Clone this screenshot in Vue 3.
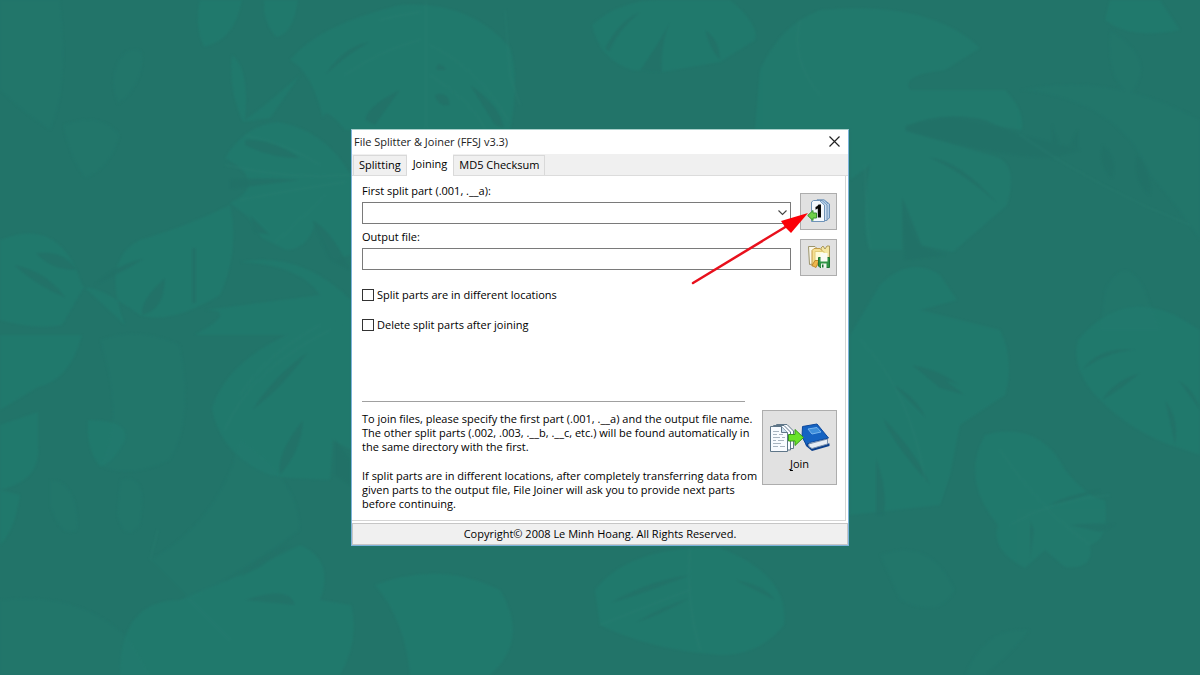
<script setup>
import { ref } from 'vue'

const tabs = ['Splitting', 'Joining', 'MD5 Checksum']
const active = ref('Joining')
const differentLocations = ref(false)
const deleteAfter = ref(false)
const output = ref('')
</script>

<template>
  <div class="desktop">
    <svg class="foliage" viewBox="0 0 1200 675" preserveAspectRatio="xMidYMid slice" aria-hidden="true">
      <g class="faint">
        <path d="M0 0H60Q70 90 50 130Q20 110 0 90Z" />
        <path d="M118 104Q105 75 125 52Q150 40 140 75Q133 95 118 104Z" />
        <path d="M63 125Q70 160 85 178Q110 170 120 135Q100 110 63 125Z" />
        <path d="M100 340Q140 325 180 345Q195 420 170 460Q130 480 100 466Q125 420 100 340Z" />
        <path d="M120 480Q150 470 140 525Q125 545 117 515Z" />
        <path d="M50 480Q78 480 78 530Q60 540 50 505Z" />
        <path d="M1110 30Q1160 60 1130 95Q1105 80 1110 30Z" />
        <path d="M880 555Q930 535 955 590Q940 620 900 600Z" />
        <path d="M1020 90Q1120 100 1150 175Q1180 210 1200 240V120Q1110 70 1020 90Z" />
        <path d="M1105 290Q1125 250 1145 290L1160 330H1100Z" />
        <path d="M240 440Q300 480 300 530Q260 560 190 600Q160 570 150 560Q220 520 240 440Z" />
        <path d="M0 600Q80 590 130 640L150 675H0Z" />
        <path d="M965 675Q985 625 1030 630Q1010 655 985 675Z" />
      </g>
      <g class="leaf">
        <path d="M200 0H242Q235 40 204 47Q194 25 200 0Z" />
        <path d="M264 0H298Q293 35 276 37Q262 20 264 0Z" />
        <path d="M290 60Q318 25 400 5Q470 0 510 48Q520 80 510 130H345Q325 105 323 118Q312 72 290 60Z" />
        <path d="M232 55Q250 70 245 120Q260 110 300 75L270 118L243 122Q228 90 232 55Z" />
        <path d="M225 158Q245 125 278 122Q325 130 351 175V255L333 260L315 225Q306 250 286 250L262 238L248 217L230 203Q270 183 225 158Z" />
        <path d="M0 240Q60 215 82 285L125 325Q100 260 140 240Q190 225 230 205Q240 250 220 295Q170 325 140 315Q90 280 82 290L62 325Q35 330 0 320Z" />
        <path d="M240 262Q300 265 320 295L205 310Q240 310 195 335H351V300Q300 250 240 262Z" />
        <path d="M0 335H82Q70 380 38 387L0 410Z" />
        <path d="M0 425L38 412V445Q42 480 0 490Z" />
        <path d="M212 408Q230 350 330 318L351 330V450L333 440L330 480L290 478L270 475Q220 455 212 408Z" />
        <path d="M0 490L20 495Q15 530 0 545Z" />
        <path d="M88 420Q130 420 125 440Q112 465 100 466Q86 450 88 420Z" />
        <path d="M120 675Q120 600 180 600L240 575L300 545Q335 560 320 600L351 605Q360 640 340 675Z" />
        <path d="M375 585Q440 560 500 590Q530 640 490 675H410Q405 620 375 585Z" />
        <path d="M595 590Q630 545 720 548Q790 575 784 625Q760 655 720 655Q650 650 600 625Z" />
        <path d="M592 25Q620 0 660 0H730Q760 25 755 40L720 62L662 72L632 70Q600 60 592 25Z" />
        <path d="M760 70Q780 25 820 10Q930 0 980 48L945 70Q900 75 910 90H1005Q1025 110 1022 130Q985 125 950 117L906 125V131L990 155Q1020 160 1007 205L953 252L920 245Q905 220 902 198V250H870Q860 230 870 165L850 180V130H755Z" />
        <path d="M1110 0H1160L1180 30Q1130 40 1105 20Z" />
        <path d="M850 335L880 285Q910 255 940 275L957 300L920 310L1000 330Q1015 360 1005 395L960 425L950 475L940 505L895 510L850 515Z" />
        <path d="M1078 340Q1120 290 1175 315L1200 330V455L1170 445Q1130 430 1100 400Q1070 370 1078 340Z" />
        <path d="M985 435Q1040 420 1065 470Q1090 500 1105 500Q1110 540 1090 545Q1095 570 1065 567L1045 550L1025 568Q990 550 998 525Q960 480 985 435Z" />
      </g>
      <g class="slot">
        <path d="M245 140Q270 138 300 158Q270 158 245 145Z" />
        <path d="M230 180Q270 177 300 180L230 189Z" />
        <path d="M312 220Q332 230 350 270L330 260Z" />
        <path d="M250 215L270 235L255 232Z" />
        <path d="M36 253Q65 250 76 270Q50 270 36 253Z" />
        <path d="M14 265Q45 270 66 298Q35 285 14 265Z" />
        <path d="M95 285Q115 265 145 258L125 270Z" />
        <path d="M165 278Q165 310 142 315Q140 300 165 278Z" />
        <path d="M192 248H196V303H192Z" />
        <path d="M325 75Q345 45 370 42Q350 52 325 75Z" />
        <path d="M365 120Q368 105 400 90L375 125Z" />
        <path d="M435 95Q448 90 450 105Q438 108 435 95ZM438 64Q446 66 446 70L436 70Z" />
        <path d="M470 85Q500 105 504 128L495 125Z" />
        <path d="M605 48Q620 20 640 12Q618 30 609 52Z" />
        <path d="M670 22Q660 45 662 72L640 70Q658 45 670 22Z" />
        <path d="M705 30Q720 40 720 60Q710 50 705 30Z" />
        <path d="M905 127Q940 110 985 120L1020 135L1080 150L1050 158Q990 155 906 131Z" />
        <path d="M928 157Q960 160 998 204Q960 170 928 157Z" />
        <path d="M902 197Q910 215 922 246L945 255L905 260Z" />
        <path d="M1052 125L1060 148L1052 160ZM1078 130V150L1070 145ZM1103 145Q1118 160 1112 178Q1098 165 1103 145ZM1137 155Q1152 170 1150 195Q1132 180 1137 155Z" />
        <path d="M912 365Q935 368 960 385L945 380L965 395L940 388Z" />
        <path d="M893 385Q915 395 926 418ZM883 418Q915 450 930 485Q890 440 883 418ZM876 458Q888 490 884 515H876Z" />
        <path d="M1082 370Q1100 345 1138 350Q1110 350 1082 370Z" />
        <path d="M1102 400Q1115 380 1140 373Q1120 390 1102 400ZM1165 400Q1180 420 1175 445ZM1178 380Q1195 390 1200 410Z" />
        <path d="M1070 525Q1100 522 1115 525L1100 532ZM1050 505Q1065 495 1100 490Q1075 500 1050 505ZM1030 520V560L1034 530Z" />
        <path d="M252 410Q275 375 308 352Q280 390 252 410Z" />
        <path d="M303 420Q302 450 280 475Q275 455 303 420ZM335 440L350 460V485L335 475Z" />
        <path d="M240 577Q265 550 290 545L260 567ZM245 600Q290 585 295 605Z" />
        <path d="M610 603Q650 580 690 575Q640 595 610 603ZM635 623Q665 605 690 598Q660 615 635 623ZM735 580Q765 585 775 600Z" />
      </g>
      <g class="vein">
        <path d="M426 0V128" />
        <path d="M225 165Q290 180 351 175M240 200Q290 190 345 182M275 243Q305 215 325 195M245 135Q290 145 320 165" />
        <path d="M345 75Q380 50 420 40M430 45Q480 70 508 120M505 10L510 75L520 105M380 20Q400 15 420 12M430 75Q470 100 485 128" />
        <path d="M800 20Q790 60 820 95M1020 135Q1100 190 1190 225M865 165Q865 210 870 250" />
        <path d="M860 340Q910 390 925 480M1000 450Q1040 510 1090 545M1010 525Q1050 500 1110 495" />
        <path d="M240 395Q265 355 320 325M190 600L230 640M150 560L158 530M225 430Q250 370 330 330" />
        <path d="M690 548Q685 600 700 650M600 625Q650 605 690 590" />
      </g>
    </svg>

    <main class="window">
      <header class="titlebar">
        <h1>File Splitter &amp; Joiner (FFSJ v3.3)</h1>
        <button class="close" type="button" aria-label="Close">
          <svg width="11" height="11" viewBox="0 0 11 11"><path d="M0.5 0.5L10.5 10.5M10.5 0.5L0.5 10.5" fill="none" stroke="#222" stroke-width="1.2" /></svg>
        </button>
      </header>

      <div class="tabs" role="tablist">
        <button
          v-for="tab in tabs"
          :key="tab"
          type="button"
          role="tab"
          class="tab"
          :class="{ active: tab === active }"
          :aria-selected="tab === active"
          @click="active = tab"
        >{{ tab }}</button>
      </div>

      <section class="panel">
        <div class="row">
          <div class="field">
            <label for="first">First split part (.001, .__a):</label>
            <div class="combo">
              <select id="first"><option value=""></option></select>
              <svg class="chevron" width="9" height="6" viewBox="0 0 9 6" aria-hidden="true"><path d="M0.5 0.5L4.5 4.5L8.5 0.5" fill="none" stroke="#444" stroke-width="1.1" /></svg>
            </div>
          </div>
          <button class="tool" type="button" aria-label="Choose first part">
            <svg width="24" height="24" viewBox="0 0 24 24">
              <g stroke="#6f93b8" stroke-width="1">
                <path d="M10 .8H17L22.500 5V19L19.500 21H10Z" fill="#b4cde6" />
                <path d="M7.500 1.500H15L20 6V21.500H7.500Z" fill="#cfe0f1" />
                <path d="M4.500 3L6.500 1.500H12.500L17.500 6V22.500H4.500Z" fill="#f3f8fd" />
              </g>
              <path d="M13 2L17 6M15.500 1.500L19.500 5.500M18 2L21 5" stroke="#7fa6cc" fill="none" />
              <path d="M11.500 5.500H14V18.500H10.800V9.500L8.500 10.700V8Q10.700 7.300 11.500 5.500Z" fill="#080808" />
              <path d="M.7 16.500L6 11.500V14H9.500V19H6V21.500Z" fill="#6fd14a" stroke="#38922c" />
            </svg>
          </button>
        </div>

        <div class="row">
          <div class="field">
            <label for="output">Output file:</label>
            <input id="output" v-model="output" class="textbox" type="text">
          </div>
          <button class="tool" type="button" aria-label="Choose output file">
            <svg width="24" height="24" viewBox="0 0 24 24">
              <path d="M1.500 1.500H8L10 3.500V18.500L2.500 19.500Z" fill="#fbf8e9" stroke="#9c946d" />
              <path d="M14 3L16 1L18 4L20 1H22.500V14H14Z" fill="#f4e6a2" stroke="#ab985c" />
              <path d="M5 5.500L7 3.500H13L15 5.500V20H9L5 21Z" fill="#f5df91" stroke="#c29b47" />
              <path d="M8 6.500H17V17H8Z" fill="#fffbd6" stroke="#dfcb78" />
              <path d="M5 20.500L8 15.500H12L9 22.500Z" fill="#eeb64b" stroke="#bf8a2d" />
              <path d="M11.500 12.500H22.500V22.500H13L11.500 21Z" fill="#2f9444" stroke="#207432" />
              <path d="M13.500 8H20.500V16.500H13.500Z" fill="#fafaf4" />
              <path d="M14 18.500H19.500V23H14Z" fill="#edf5ed" />
              <path d="M15 19.500H16.500V22.500H15Z" fill="#1d6a32" />
            </svg>
          </button>
        </div>

        <div class="options">
          <label class="check"><input v-model="differentLocations" type="checkbox">Split parts are in different locations</label>
          <label class="check"><input v-model="deleteAfter" type="checkbox">Delete split parts after joining</label>
        </div>

        <div class="bottom">
          <div class="help">
            <p>To join files, please specify the first part (.001, .__a) and the output file name.<br>The other split parts (.002, .003, .__b, .__c, etc.) will be found automatically in<br>the same directory with the first.</p>
            <p>If split parts are in different locations, after completely transferring data from<br>given parts to the output file, File Joiner will ask you to provide next parts<br>before continuing.</p>
          </div>
          <button class="join" type="button">
            <svg width="61" height="30" viewBox="0 0 61 30" aria-hidden="true">
              <g fill="#f8fbff" stroke="#5f7688">
                <path d="M7.500 1.500H18L24.500 8V25.500H7.500Z" />
                <path d="M4.500 2.500H15L21.500 9V27H4.500Z" />
                <path d="M1.500 3.500H12.500L18.500 9.500V28.500H1.500Z" />
                <path d="M12.500 3.500V9.500H18.500" fill="#cfe0ee" />
              </g>
              <path d="M4 8.500H10M4 11.500H8M10 11.500H14M4 14.500H11M13 14.500H16M4 17.500H7M9 17.500H15M4 20.500H12M4 23.500H9M11 23.500H16" stroke="#a8b4c0" fill="none" />
              <path d="M33 10L37 23L43 28L60.500 23V20.500L39 20Z" fill="#0b3f8c" />
              <path d="M39.500 21L58.500 16V21L43 25.500Q39 24 39.500 21Z" fill="#e6ecf4" stroke="#7d93b0" />
              <path d="M33.500 3.500L48 1L59.500 15L40.500 19.500Q37.500 20.500 38 23L33 14Z" fill="#1563c2" stroke="#0c489c" />
              <path d="M39 6L48 4.500L52 9L43 11Z" fill="#3f8fdc" stroke="#79b6ee" />
              <path d="M19.500 11.500H26V6.500L34.500 14.500L26 22.500V18H19.500Z" fill="#69e329" stroke="#37971b" />
            </svg>
            <span><u>J</u>oin</span>
          </button>
        </div>

        <svg class="pointer" width="118" height="76" viewBox="0 0 118 76" aria-hidden="true">
          <path d="M2 73L96 16" stroke="#e8101c" stroke-width="2.500" fill="none" stroke-linecap="round" />
          <path d="M117 3L90 11L94 17L100 23Z" fill="#fb0007" />
        </svg>
      </section>

      <footer class="status">Copyright© 2008 Le Minh Hoang. All Rights Reserved.</footer>
    </main>
  </div>
</template>

<style>
body {
  margin: 0;
}
</style>

<style scoped>
* {
  box-sizing: border-box;
}

.desktop {
  position: relative;
  display: flex;
  align-items: center;
  justify-content: center;
  min-height: 100vh;
  padding-bottom: 1px;
  overflow: hidden;
  background: #227469;
  color: #000;
  font: 11px/14px "Open Sans", "Noto Sans", sans-serif;
}

.foliage {
  position: absolute;
  inset: 0;
  width: 100%;
  height: 100%;
  filter: blur(1px);
}

.faint {
  fill: #22786c;
  opacity: 0.5;
}

.leaf {
  fill: #217b6e;
  opacity: 0.75;
}

.slot {
  fill: #227268;
  opacity: 0.9;
}

.vein {
  fill: none;
  stroke: #2b8173;
  opacity: 0.6;
}

.window {
  position: relative;
  display: flex;
  flex-direction: column;
  width: 100%;
  max-width: 498px;
  border: 1px solid #7db4dc;
  border-top-color: #a9cfca;
  background: #fff;
}

button,
input,
select {
  margin: 0;
  padding: 0;
  border: 0;
  border-radius: 0;
  color: inherit;
  font: inherit;
}

.titlebar {
  display: flex;
  align-items: center;
  justify-content: space-between;
  height: 24px;
  padding: 0 8px 0 2px;
}

h1 {
  margin: 0;
  color: #222;
  font: inherit;
}

.close {
  display: flex;
  background: none;
}

.tabs {
  display: flex;
  align-items: flex-end;
  height: 22px;
  padding-left: 1px;
  border-bottom: 1px solid #dcdcdc;
  background: #f0f0f0;
}

.tab {
  height: 20px;
  padding: 0 5px;
  border: 1px solid #d9d9d9;
  border-bottom: 0;
  background: #f0f0f0;
}

.tab.active {
  height: 22px;
  margin-bottom: -1px;
  padding-bottom: 2px;
  border-color: #fff;
  background: #fff;
}

.panel {
  position: relative;
  padding: 8px 8px 9px 10px;
  margin-right: 2px;
  border-right: 1px solid #d5d5d5;
  border-bottom: 1px solid #d5d5d5;
}

.row {
  display: flex;
  gap: 9px;
  height: 46px;
}

.field {
  flex: 1;
  min-width: 0;
}

.field label {
  display: block;
  height: 18px;
}

.combo {
  position: relative;
}

select,
.textbox {
  display: block;
  width: 100%;
  height: 22px;
  padding: 0 4px;
  border: 1px solid #7a7a7a;
  background: #fff;
  appearance: none;
}

.chevron {
  position: absolute;
  top: 8px;
  right: 4px;
  pointer-events: none;
}

.tool,
.join {
  display: flex;
  align-items: center;
  justify-content: center;
  border: 1px solid #adadad;
  background: #e1e1e1;
}

.tool {
  width: 37px;
  height: 37px;
  margin-top: 9px;
}

.options {
  display: flex;
  flex-direction: column;
  align-items: flex-start;
  gap: 16px;
  padding-top: 12px;
}

.check {
  display: flex;
  align-items: center;
  gap: 3px;
}

.check input {
  width: 12px;
  height: 12px;
  border: 1px solid #333;
  background: #fff;
  appearance: none;
}

.check input:checked {
  background: #333;
}

.bottom {
  display: flex;
  align-items: flex-start;
  justify-content: space-between;
  margin-top: 69px;
}

.help {
  white-space: nowrap;
}

.help::before {
  display: block;
  width: 383px;
  border-top: 1px solid #a0a0a0;
  content: "";
}

.help p {
  margin: 10px 0 15px;
}

.help p + p {
  margin-bottom: 0;
}

.join {
  flex-direction: column;
  gap: 4px;
  width: 75px;
  height: 75px;
  margin-top: 9px;
}

.join u {
  text-decoration-skip-ink: none;
  text-underline-offset: 2px;
}

.pointer {
  position: absolute;
  top: 34px;
  right: 36px;
  pointer-events: none;
}

.status {
  height: 22px;
  margin-top: 2px;
  border: 1px solid #c6c6c6;
  background: #f0f0f0;
  line-height: 19px;
  text-align: center;
}
</style>
